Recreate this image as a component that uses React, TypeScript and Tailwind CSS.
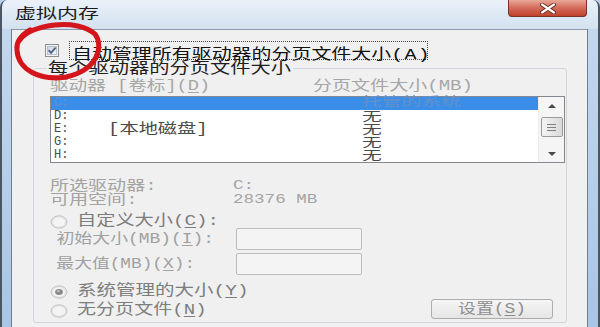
import React from 'react';

// text in the shot is stretched sideways, so glyph runs are scaled on x
function S({ className = '', children }: { className?: string; children: React.ReactNode }) {
  return <span className={`inline-block origin-left whitespace-nowrap ${className}`}>{children}</span>;
}

function U({ children }: { children: React.ReactNode }) {
  return <span className="underline underline-offset-2">{children}</span>;
}

function CheckBox() {
  return (
    <svg width="14" height="13" viewBox="0 0 14 13" className="shrink-0">
      <defs>
        <linearGradient id="cbg" x1="0" y1="0" x2="1" y2="1">
          <stop offset="0" stopColor="#cbd3dc" />
          <stop offset="1" stopColor="#f5f7f9" />
        </linearGradient>
      </defs>
      <rect x="0.5" y="0.5" width="13" height="12" fill="#f4f4f4" stroke="#8f8f8f" />
      <rect x="2.5" y="2.5" width="9" height="8" fill="url(#cbg)" stroke="#b7c1cc" />
      <path d="M3.6 6.2 L6 8.9 L10.6 3.6" fill="none" stroke="#4a6188" strokeWidth="1.8" />
    </svg>
  );
}

function Radio({ checked = false }: { checked?: boolean }) {
  return (
    <svg width="18" height="14" viewBox="0 0 18 14" className="shrink-0">
      <ellipse cx="9" cy="7" rx="8" ry="6.2" fill="#e4e4e4" stroke="#c4c4c4" />
      <ellipse cx="9" cy="7" rx="6" ry="4.6" fill="#f4f4f4" />
      {checked && <ellipse cx="9" cy="7" rx="3.9" ry="3" fill="#888888" />}
      {checked && <ellipse cx="8.3" cy="6.2" rx="1.7" ry="1.1" fill="#b9b9b9" />}
    </svg>
  );
}

function Arrow({ up = false }: { up?: boolean }) {
  return (
    <svg width="8" height="4" viewBox="0 0 8 4">
      <path d={up ? 'M0 4 L4 0 L8 4 Z' : 'M0 0 L4 4 L8 0 Z'} fill="#4a4a4a" />
    </svg>
  );
}

const drives = [
  { d: 'C:', label: '', size: '托管的系统', sel: true },
  { d: 'D:', label: '', size: '无', sel: false },
  { d: 'E:', label: '[本地磁盘]', size: '无', sel: false },
  { d: 'G:', label: '', size: '无', sel: false },
  { d: 'H:', label: '', size: '无', sel: false },
];

export default function App() {
  return (
    <div className="relative flex h-[327px] w-[600px] flex-col overflow-hidden bg-[#bcd2ea] font-['Liberation_Mono','Noto_Sans_CJK_SC',monospace]">
      {/* title bar */}
      <div className="flex h-[29px] shrink-0 items-start justify-between rounded-t-[7px] border-x-2 border-[#4b5663] bg-gradient-to-b from-[#eaf1f9] to-[#d3e1f0]">
        <S className="ml-[13px] mt-[5px] scale-x-[1.5] text-[14px] leading-[18px] text-[#1c1c1c]">虚拟内存</S>
        <div className="mr-[11px] flex h-[17px] w-[79px] items-center justify-center rounded-b-[4px] border border-t-0 border-[#7d3128] bg-gradient-to-b from-[#e8a899] via-[#d36a58] to-[#c0412d]">
          <svg width="18" height="11" viewBox="0 0 18 11">
            <path d="M3 1.5 L15 9.5 M15 1.5 L3 9.5" stroke="#6b241b" strokeWidth="4" strokeLinecap="round" />
            <path d="M3 1.5 L15 9.5 M15 1.5 L3 9.5" stroke="#ffffff" strokeWidth="2.2" strokeLinecap="round" />
          </svg>
        </div>
      </div>

      <div className="flex min-h-0 flex-1">
        <div className="w-[12px] border-l-2 border-r border-l-[#4b5663] border-r-[#6d7f94] bg-gradient-to-b from-[#c3d7ed] to-[#a9c5e5]" />

        <div className="flex-1 border-t border-[#8b98a8] bg-[#f0f0f0] pl-[21px]">
          {/* auto manage checkbox */}
          <div className="ml-[12px] mt-[11px] flex h-[19px] items-center gap-[10px]">
            <CheckBox />
            <div className="h-[19px] w-[359px] border border-dotted border-[#444] pl-[2px] text-[#111]">
              <S className="translate-y-[1px] scale-x-[1.33] text-[15px] leading-[17px]">
                自动管理所有驱动器的分页文件大小<span className="tracking-[1px]">(A)</span>
              </S>
            </div>
          </div>

          <fieldset className="mt-[1px] w-[534px] rounded-[3px] border border-[#d0d6db]">
            <legend className="ml-[13px] w-[246px] px-[1px] text-[15px] leading-[14px] text-[#1e1e1e]">
              <S className="translate-y-[2px] scale-x-[1.35]">每个驱动器的分页文件大小</S>
            </legend>

            <div className="pl-[16px] pr-[1px]">
              <div className="mt-[3px] grid h-[16px] grid-cols-[263px_1fr] text-[14px] leading-[16px] text-[#a6a6a6]">
                <S className="scale-x-[1.33]">驱动器 [卷标](<U>D</U>)</S>
                <S className="scale-x-[1.36]">分页文件大小(MB)</S>
              </div>

              {/* drive list */}
              <div className="mt-[2px] flex h-[67px] w-[515px] border border-[#828790] bg-white">
                <div className="flex-1">
                  {drives.map(r => (
                    <div
                      key={r.d}
                      className={`grid h-[13px] grid-cols-[57px_254px_1fr] leading-[13px] ${r.sel ? 'bg-[#3b8ee8] text-[#6590c9]' : 'text-[#4a4a4a]'}`}
                    >
                      <span className="pl-[3px] text-[12px]">{r.d}</span>
                      <S className="scale-x-[1.37] text-[14px]">{r.label}</S>
                      {r.sel ? (
                        <S className="scale-x-[1.65] text-[12px]">{r.size}</S>
                      ) : (
                        <S className="mt-[2px] scale-x-[1.65] text-[12px] leading-[12px]">{r.size}</S>
                      )}
                    </div>
                  ))}
                </div>
                <div className="flex w-[26px] flex-col items-center border-l border-[#ececec] bg-[#f5f5f5]">
                  <div className="flex h-[17px] items-center justify-center">
                    <Arrow up />
                  </div>
                  <div className="mt-[3px] flex h-[20px] w-[22px] flex-col items-center justify-center gap-[2px] rounded-[2px] border border-[#9a9a9a] bg-gradient-to-r from-[#f4f4f4] to-[#dadada]">
                    <div className="h-px w-[9px] bg-[#7f7f7f]" />
                    <div className="h-px w-[9px] bg-[#7f7f7f]" />
                    <div className="h-px w-[9px] bg-[#7f7f7f]" />
                  </div>
                  <div className="flex-1" />
                  <div className="flex h-[17px] items-center justify-center">
                    <Arrow />
                  </div>
                </div>
              </div>

              {/* selected drive info */}
              <div className="mt-[16px] grid grid-cols-[183px_1fr] text-[#a3a3a3]">
                <S className="h-[14px] scale-x-[1.36] text-[14px] leading-[14px]">所选驱动器:</S>
                <S className="h-[14px] scale-x-[1.35] text-[13px] leading-[14px]">C:</S>
                <S className="h-[14px] scale-x-[1.36] text-[14px] leading-[14px]">可用空间:</S>
                <S className="h-[14px] scale-x-[1.35] text-[13px] leading-[14px]">28376 MB</S>
              </div>

              <div className="mt-[8px] flex h-[14px] items-center gap-[9px] text-[#7d7d7d]">
                <Radio />
                <S className="scale-x-[1.28] text-[15px] leading-[14px]">自定义大小(<U>C</U>):</S>
              </div>

              <div className="-mt-px grid h-[22px] grid-cols-[186px_126px] items-center text-[#a0a0a0]">
                <S className="pl-[5px] scale-x-[1.28] text-[14px] leading-[16px]">初始大小(MB)(<U>I</U>):</S>
                <div className="h-[22px] rounded-[2px] border border-[#bcbcbc] bg-[#f4f4f4]" />
              </div>
              <div className="mt-[3px] grid h-[22px] grid-cols-[186px_126px] items-center text-[#a0a0a0]">
                <S className="pl-[5px] scale-x-[1.27] text-[14px] leading-[16px]">最大值(MB)(<U>X</U>):</S>
                <div className="h-[22px] rounded-[2px] border border-[#bcbcbc] bg-[#f4f4f4]" />
              </div>

              <div className="mt-[8px] flex items-end justify-between pb-[3px]">
                <div className="flex flex-col gap-[2px] text-[#7d7d7d]">
                  <div className="flex h-[17px] items-center gap-[9px]">
                    <Radio checked />
                    <S className="scale-x-[1.3] text-[15px] leading-[17px]">系统管理的大小(<U>Y</U>)</S>
                  </div>
                  <div className="flex h-[17px] items-center gap-[9px]">
                    <Radio />
                    <S className="scale-x-[1.27] text-[15px] leading-[17px]">无分页文件(<U>N</U>)</S>
                  </div>
                </div>
                <div className="mr-[12px] flex h-[20px] w-[122px] items-center justify-center rounded-[3px] border border-[#adadad] bg-gradient-to-b from-[#f6f6f6] to-[#e5e5e5] text-[#8e8e8e]">
                  <span className="w-[68px]">
                    <S className="scale-x-[1.28] text-[14px] leading-[16px]">设置(<U>S</U>)</S>
                  </span>
                </div>
              </div>
            </div>
          </fieldset>
        </div>

        <div className="w-[13px] border-l border-r-2 border-l-[#6d7f94] border-r-[#4b5663] bg-gradient-to-b from-[#c3d7ed] to-[#a9c5e5]" />
      </div>

      {/* red hand-drawn circle over the checkbox */}
      <svg className="pointer-events-none absolute left-0 top-0" width="600" height="327" viewBox="0 0 600 327">
        <path
          d="M20 40 C30 24, 78 18, 95 34 C104 46, 98 70, 66 77 C40 81, 18 70, 17 50 C16 42, 20 36, 30 30"
          fill="none"
          stroke="#d4161c"
          strokeWidth="5"
          strokeLinecap="round"
        />
      </svg>
    </div>
  );
}
